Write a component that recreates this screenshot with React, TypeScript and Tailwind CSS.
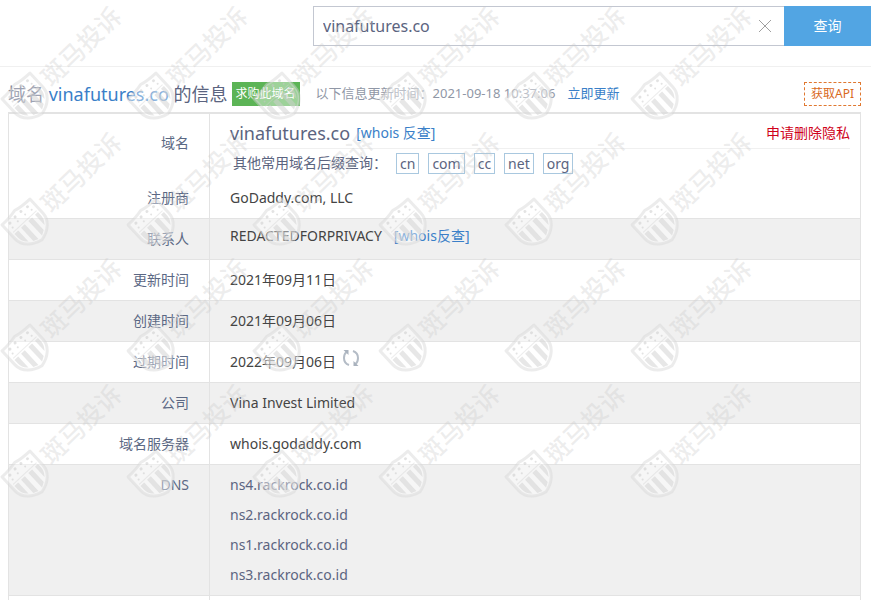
import React from 'react';

const suffixes = ['cn', 'com', 'cc', 'net', 'org'];

const nameServers = [
  'ns4.rackrock.co.id',
  'ns2.rackrock.co.id',
  'ns1.rackrock.co.id',
  'ns3.rackrock.co.id',
];

const RefreshIcon = () => (
  <svg className="h-5 w-[18px]" viewBox="0 0 18 20" fill="none" stroke="#b4bcc6" strokeWidth="2">
    <path d="M7 17C4 16 2 13.500 2 10c0-2.800 1-4.800 2.500-6" />
    <path d="M11 3C14 4 16 6.500 16 10c0 2.800-1 4.800-2.500 6" />
    <path d="M1.500 2h5v5z" fill="#a9b2bd" stroke="none" />
    <path d="M16.500 18h-5v-5z" fill="#a9b2bd" stroke="none" />
  </svg>
);

const WatermarkTile = () => (
  <svg className="size-[126px] overflow-visible" viewBox="0 0 126 126">
    <g transform="translate(16 86) rotate(-43)">
      <path
        d="M-19 0Q-8 0 0-2Q8 0 19 0V19C19 29 10 36 0 38C-10 36-19 29-19 19Z"
        fill="#fff"
        fillOpacity="0.4"
        stroke="#d4d4d4"
        strokeOpacity="0.45"
        strokeWidth="3"
        strokeLinejoin="round"
      />
      <path
        d="M-16 15h5v15q-5-4-5-10zM-7 15h5v20l-5-2zM3 15h5v17l-5 3zM12 15h4v5q0 4-4 9z"
        fill="#d0d0d0"
        fillOpacity="0.5"
      />
      <path d="M-16 13H16" stroke="#d0d0d0" strokeOpacity="0.4" />
      <g fill="#c8c8c8" fillOpacity="0.5">
        <circle cx="-12" cy="4" r="1.500" />
        <circle cx="-4" cy="3" r="1.500" />
        <circle cx="4" cy="3" r="1.500" />
        <circle cx="12" cy="4" r="1.500" />
        <circle cx="-13" cy="9" r="1" />
        <circle cx="-5" cy="8" r="1" />
        <circle cx="5" cy="8" r="1" />
        <circle cx="13" cy="9" r="1" />
      </g>
    </g>
    <text
      transform="translate(54 73) rotate(-44)"
      x="-12"
      y="9"
      fontSize="25"
      fontWeight="500"
      fill="#c8c8c8"
      fillOpacity="0.33"
    >
      斑马投诉
    </text>
  </svg>
);

type RowProps = {
  label: string;
  shaded?: boolean;
  children: React.ReactNode;
};

const Row = ({ label, shaded, children }: RowProps) => (
  <tr className={shaded ? 'bg-[#f0f0f0]' : 'bg-white'}>
    <th
      scope="row"
      className="h-[41px] border-t border-r border-[#e3e3e3] pr-5 text-right align-top font-normal leading-10 text-[#5b6884]"
    >
      {label}
    </th>
    <td className="h-[41px] border-t border-[#e3e3e3] pl-5 align-top leading-10">{children}</td>
  </tr>
);

const App = () => {
  return (
    <div className="relative bg-white font-['Noto_Sans','Noto_Sans_CJK_SC',sans-serif] text-sm text-[#444]">
      {/* Search bar */}
      <header className="flex h-[67px] items-start border-b border-[#f0f0f0] pt-[6px] pl-[313px]">
        <form className="flex h-10 flex-1" onSubmit={(e) => e.preventDefault()}>
          <div className="flex flex-1 items-center border border-r-0 border-[#c3c7d1] pr-3">
            <input
              type="text"
              aria-label="域名"
              defaultValue="vinafutures.co"
              className="h-full min-w-0 flex-1 bg-transparent pl-[9px] text-base text-[#5b6480] outline-none"
            />
            <button type="reset" aria-label="清空">
              <svg className="size-[14px]" viewBox="0 0 14 14" stroke="#a0a0a0" strokeWidth="1">
                <path d="M1 1l12 12M13 1L1 13" />
              </svg>
            </button>
          </div>
          <button type="submit" className="w-[87px] bg-[#52a5e3] text-sm text-white">
            查询
          </button>
        </form>
      </header>

      {/* Title */}
      <div className="flex h-[45px] items-center px-2 pt-2">
        <h1 className="text-lg leading-6 text-[#5b6480]">
          域名 <a href="#" className="text-[#3a7fc8]">vinafutures.co</a> 的信息
        </h1>
        <button className="ml-1 h-6 bg-[#5cb456] px-1 text-xs text-white">求购此域名</button>
        <p className="ml-4 flex gap-3 text-[13px] text-[#9097a6]">
          以下信息更新时间：2021-09-18 10:37:06
          <a href="#" className="text-[#3a7fc8]">立即更新</a>
        </p>
        <a
          href="#"
          className="mr-[2px] ml-auto flex h-6 items-center border border-dashed border-[#e07830] px-[6px] text-xs text-[#d9691c]"
        >
          获取API
        </a>
      </div>

      {/* Whois table */}
      <div className="mr-[10px] ml-2 border-x border-t-2 border-[#e3e3e3]">
        <table className="w-full border-separate border-spacing-0">
          <tbody>
            <tr>
              <th
                scope="row"
                className="h-[63px] w-[201px] border-r border-[#e3e3e3] pt-[9px] pr-5 text-right align-top font-normal leading-10 text-[#5b6884]"
              >
                域名
              </th>
              <td className="pr-[10px] pl-5 align-top">
                <div className="flex h-[35px] items-center justify-between border-b border-[#f0f0f0] pt-1">
                  <p className="flex items-center gap-[6px]">
                    <span className="text-lg text-[#5b6480]">vinafutures.co</span>
                    <a href="#" className="text-[#3a7fc8]">[whois 反查]</a>
                  </p>
                  <a href="#" className="text-[#d0021b]">申请删除隐私</a>
                </div>
                <div className="flex h-7 items-center pl-[3px] text-[#5b6480]">
                  <span>其他常用域名后缀查询：</span>
                  <span className="ml-[9px] flex gap-[9px]">
                    {suffixes.map((s) => (
                      <a key={s} href="#" className="border border-[#a9c8df] px-[3px] leading-[19px]">
                        {s}
                      </a>
                    ))}
                  </span>
                </div>
              </td>
            </tr>
            <tr>
              <th
                scope="row"
                className="h-[41px] border-r border-[#e3e3e3] pr-5 text-right font-normal text-[#5b6884]"
              >
                注册商
              </th>
              <td className="pl-5">GoDaddy.com, LLC</td>
            </tr>
            <Row label="联系人" shaded>
              <p className="flex gap-3 leading-[34px]">
                REDACTEDFORPRIVACY
                <a href="#" className="text-[#3a7fc8]">[whois反查]</a>
              </p>
            </Row>
            <Row label="更新时间">2021年09月11日</Row>
            <Row label="创建时间" shaded>2021年09月06日</Row>
            <Row label="过期时间">
              <span className="flex gap-[6px]">
                2022年09月06日
                <button aria-label="刷新" className="mt-[6px] h-5">
                  <RefreshIcon />
                </button>
              </span>
            </Row>
            <Row label="公司" shaded>Vina Invest Limited</Row>
            <Row label="域名服务器">whois.godaddy.com</Row>
            <Row label="DNS" shaded>
              <ul className="pt-[5px] pb-[5px] leading-[30px] text-[#5b6480]">
                {nameServers.map((ns) => (
                  <li key={ns}>{ns}</li>
                ))}
              </ul>
            </Row>
            <tr>
              <td className="h-[5px] border-t border-r border-[#e3e3e3]" />
              <td className="border-t border-[#e3e3e3]" />
            </tr>
          </tbody>
        </table>
      </div>

      {/* Watermark */}
      <div
        aria-hidden="true"
        className="pointer-events-none absolute top-0 left-0 grid grid-cols-[repeat(6,126px)]"
      >
        {Array.from({ length: 24 }, (_, i) => (
          <WatermarkTile key={i} />
        ))}
      </div>
    </div>
  );
};

export default App;
